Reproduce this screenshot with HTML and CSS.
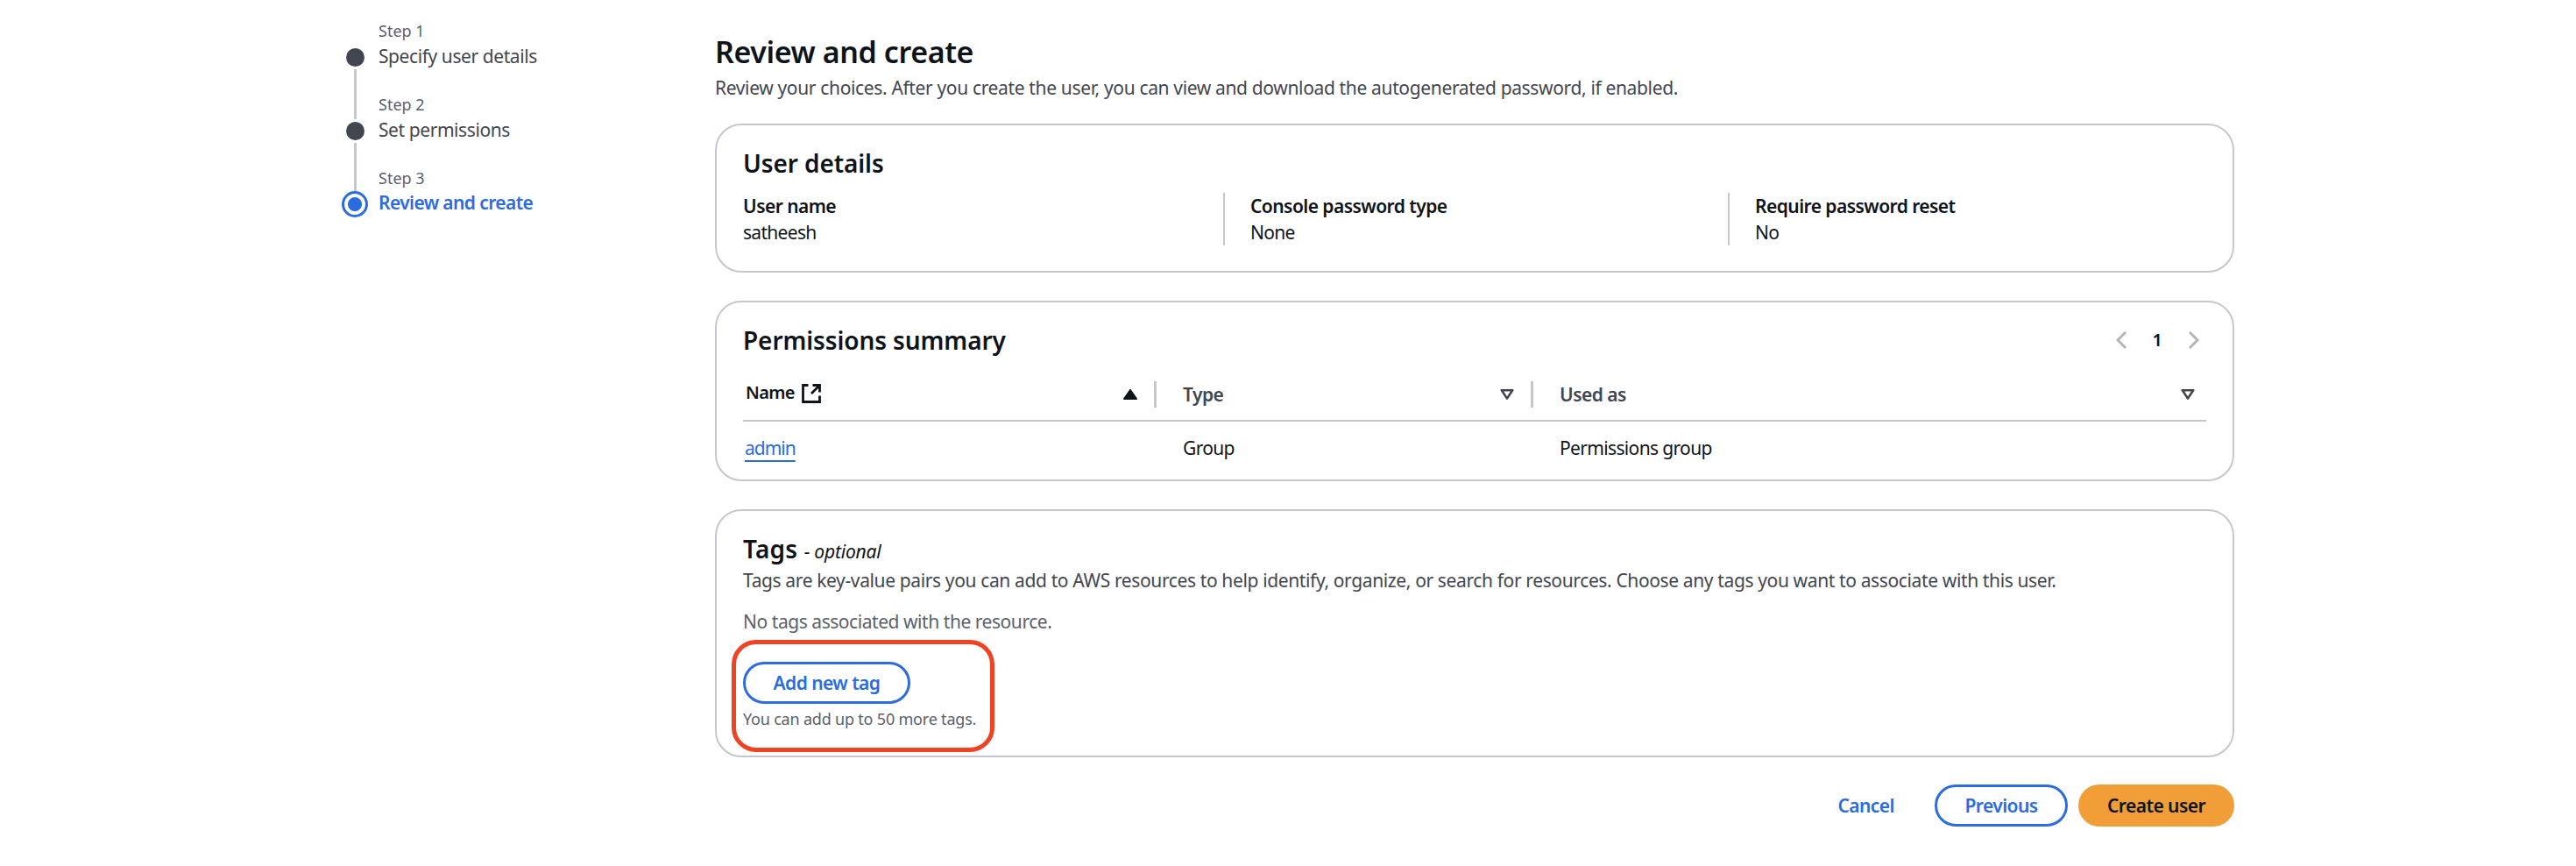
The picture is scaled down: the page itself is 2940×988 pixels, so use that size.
FILE: index.html
```html
<!DOCTYPE html>
<html lang="en">
<head>
<meta charset="utf-8">
<title>Review and create</title>
<link rel="stylesheet" href="styles.css">
</head>
<body>
<div class="page">
  <nav class="wizard">
    <div class="step">
      <span class="step-label">Step 1</span>
      <span class="marker done line"></span>
      <span class="step-title">Specify user details</span>
    </div>
    <div class="step">
      <span class="step-label">Step 2</span>
      <span class="marker done line"></span>
      <span class="step-title">Set permissions</span>
    </div>
    <div class="step">
      <span class="step-label">Step 3</span>
      <span class="marker current"></span>
      <span class="step-title active">Review and create</span>
    </div>
  </nav>
  <main class="main">
    <h1 class="page-title">Review and create</h1>
    <p class="page-desc">Review your choices. After you create the user, you can view and download the autogenerated password, if enabled.</p>

    <section class="card">
      <h2 class="card-title">User details</h2>
      <div class="details">
        <div class="detail"><div class="detail-label">User name</div><div class="detail-value">satheesh</div></div>
        <div class="detail divided"><div class="detail-label">Console password type</div><div class="detail-value">None</div></div>
        <div class="detail divided"><div class="detail-label">Require password reset</div><div class="detail-value">No</div></div>
      </div>
    </section>

    <section class="card">
      <div class="card-head">
        <h2 class="card-title">Permissions summary</h2>
        <div class="pager">
          <svg class="chev" viewBox="0 0 12 20"><path d="M11 1 2 10l9 9"/></svg>
          <span class="page-num">1</span>
          <svg class="chev" viewBox="0 0 12 20"><path d="M1 1l9 9-9 9"/></svg>
        </div>
      </div>
      <div class="table-row table-header">
        <div class="th first">
          <span class="th-name">Name
            <svg class="ext" viewBox="0 0 22 22"><path d="M7.5 1.5h-6v19h19v-7M12.5 1.5h8v8M20.5 1.5l-9.5 9.5"/></svg>
          </span>
          <svg class="sort" viewBox="0 0 16 12"><path class="solid" d="M8 1l7 10H1z"/></svg>
        </div>
        <div class="th divided-th">
          <span>Type</span>
          <svg class="sort" viewBox="0 0 16 12"><path class="hollow" d="M1.8 1.2h12.4L8 10.6z"/></svg>
        </div>
        <div class="th divided-th">
          <span>Used as</span>
          <svg class="sort" viewBox="0 0 16 12"><path class="hollow" d="M1.8 1.2h12.4L8 10.6z"/></svg>
        </div>
      </div>
      <div class="table-row table-body">
        <div class="td first"><a class="link" href="#">admin</a></div>
        <div class="td">Group</div>
        <div class="td">Permissions group</div>
      </div>
    </section>

    <section class="card">
      <h2 class="card-title tags-title">Tags <em class="optional">- optional</em></h2>
      <p class="tags-desc">Tags are key-value pairs you can add to AWS resources to help identify, organize, or search for resources. Choose any tags you want to associate with this user.</p>
      <p class="no-tags">No tags associated with the resource.</p>
      <div class="tag-action">
        <button class="btn btn-normal btn-add" type="button">Add new tag</button>
        <p class="hint">You can add up to 50 more tags.</p>
        <div class="annotation"></div>
      </div>
    </section>

    <footer class="actions">
      <button class="btn btn-link" type="button">Cancel</button>
      <div class="action-buttons">
        <button class="btn btn-normal btn-prev" type="button">Previous</button>
        <button class="btn btn-primary" type="button">Create user</button>
      </div>
    </footer>
  </main>
</div>
</body>
</html>
```

FILE: styles.css
```css
* { box-sizing: border-box; }
html, body { margin: 0; padding: 0; background: #fff; }
body {
  height: 988px;
  overflow: hidden;
  font-family: "Noto Sans", "Open Sans", sans-serif;
  font-weight: 430;
  color: #0f141a;
}
p, h1, h2 { margin: 0; }

.page { display: flex; padding-left: 390px; }

.wizard { width: 426px; padding-top: 20px; }
.step {
  display: grid;
  grid-template-columns: 30px 1fr;
  column-gap: 12px;
  grid-auto-rows: 30px;
  padding-bottom: 24px;
  align-items: center;
}
.step-label { grid-column: 2; font-size: 18px; color: #5b616b; }
.step-title { grid-column: 2; font-size: 21px; letter-spacing: -0.42px; color: #424650; margin-bottom: 2px; }
.step-title.active { color: #2b6cdf; font-weight: 600; letter-spacing: -0.6px; margin-bottom: 4px; }
.marker { justify-self: center; border-radius: 50%; position: relative; }
.marker.done { width: 21px; height: 21px; background: #424650; }
.marker.line::after {
  content: "";
  position: absolute;
  left: 9px;
  top: 24px;
  width: 3px;
  height: 57px;
  background: #c6c6cd;
}
.marker.current {
  width: 30px;
  height: 30px;
  border: 3px solid #2b6cdf;
  background: radial-gradient(circle, #2b6cdf 0 7.5px, #fff 8.5px);
}

.main { width: 1734px; padding-top: 37px; }
.page-title { font-size: 34px; line-height: 44px; font-weight: 600; letter-spacing: -0.4px; }
.page-desc { margin-top: 4px; margin-bottom: 26px; font-size: 21px; line-height: 30px; letter-spacing: -0.35px; color: #424650; }

.card {
  border: 2px solid #c6c6cd;
  border-radius: 30px;
  padding: 25px 30px 0;
  margin-bottom: 32px;
}
.card-title { font-size: 28px; line-height: 36px; font-weight: 600; letter-spacing: -0.1px; }

.details {
  display: grid;
  grid-template-columns: 548px 576px 546px;
  margin-top: 16px;
  padding-bottom: 29px;
}
.detail { font-size: 21px; line-height: 30px; letter-spacing: -0.7px; }
.detail.divided { border-left: 2px solid #c6c6cd; padding-left: 29px; }
.detail-label { font-weight: 600; letter-spacing: -0.55px; }

.card-head { display: flex; justify-content: space-between; align-items: center; }
.pager { display: flex; align-items: center; gap: 30px; padding-right: 8px; }
.chev { width: 12px; height: 20px; fill: none; stroke: #b4b4bb; stroke-width: 3; }
.page-num { font-size: 20px; font-weight: 600; line-height: 20px; }

.table-row { display: grid; grid-template-columns: 472px 430px 768px; }
.table-header { margin-top: 29px; padding-bottom: 14px; border-bottom: 2px solid #c6c6cd; height: 46px; }
.th {
  display: flex;
  justify-content: space-between;
  align-items: center;
  height: 30px;
  font-size: 21px;
  font-weight: 600;
  letter-spacing: -0.55px;
  color: #424650;
}
.th.first { color: #0f141a; padding-left: 3px; padding-right: 19px; border-right: 3px solid #c6c6cd; }
.th.divided-th { padding-left: 30px; padding-right: 13px; }
.th.divided-th:nth-child(2) { border-right: 3px solid #c6c6cd; padding-right: 19px; }
.th-name { display: flex; align-items: center; gap: 8px; margin-top: -6px; font-size: 20px; letter-spacing: -0.7px; }
.ext { width: 22px; height: 22px; fill: none; stroke: #0f141a; stroke-width: 2.8; margin-top: 4px; }
.sort { width: 16px; height: 12px; }
.sort .solid { fill: #0f141a; stroke: #0f141a; stroke-width: 2; stroke-linejoin: round; }
.sort .hollow { fill: none; stroke: #424650; stroke-width: 2.6; stroke-linejoin: round; }

.table-body { padding: 15px 0 21px; font-size: 21px; line-height: 30px; letter-spacing: -0.65px; color: #0f141a; }
.td { padding-left: 30px; }
.td.first { padding-left: 2px; }
.link {
  color: #2b6cdf;
  letter-spacing: -1px;
  text-decoration: underline;
  text-decoration-thickness: 2px;
  text-underline-offset: 6px;
}

.tags-title { letter-spacing: 0.2px; }
.optional { font-size: 21px; line-height: 1; font-weight: 400; letter-spacing: -0.2px; }
.tags-desc { margin-top: 3px; font-size: 21px; line-height: 30px; letter-spacing: -0.37px; color: #424650; }
.no-tags { margin-top: 17px; font-size: 21px; line-height: 30px; letter-spacing: -0.45px; color: #5b616b; }

.tag-action { position: relative; margin-top: 31px; padding-bottom: 29px; }
.hint { margin-top: 4px; font-size: 18px; line-height: 26px; letter-spacing: -0.2px; color: #5b616b; }
.annotation {
  position: absolute;
  left: -13px;
  top: -25px;
  width: 300px;
  height: 128px;
  border: 5px solid #ee4424;
  border-radius: 28px;
}

.btn {
  display: block;
  height: 48px;
  border-radius: 24px;
  font-family: inherit;
  font-size: 21px;
  font-weight: 600;
  letter-spacing: -0.55px;
  padding: 0;
  background: none;
  border: none;
}
.btn-normal { border: 3px solid #2b6cdf; color: #2b6cdf; background: #fff; }
.btn-add { width: 191px; }
.btn-prev { width: 152px; }
.btn-primary { width: 178px; background: #f19e38; color: #0f141a; }
.btn-link { color: #2b6cdf; }

.actions { display: flex; justify-content: flex-end; align-items: center; margin-top: -1px; gap: 46px; }
.action-buttons { display: flex; gap: 12px; }
```
